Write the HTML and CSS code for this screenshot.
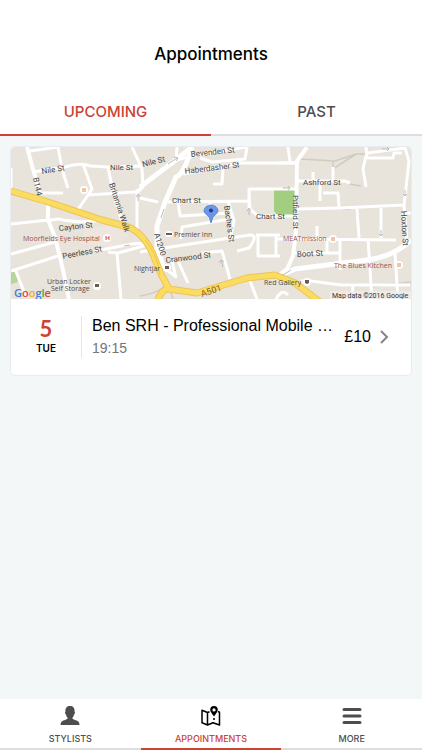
FILE: index.html
```html
<!DOCTYPE html>
<html lang="en">
<head>
<meta charset="utf-8">
<meta name="viewport" content="width=device-width, initial-scale=1">
<title>Appointments</title>
<link rel="stylesheet" href="styles.css">
</head>
<body>
<header class="header">
  <h1 class="title">Appointments</h1>
  <nav class="tabs" aria-label="Appointment lists">
    <button class="tab tab-active" type="button">UPCOMING</button>
    <button class="tab" type="button">PAST</button>
  </nav>
</header>

<main class="content">
  <article class="card">
    <svg class="map" viewBox="11 147 400 152" role="img" aria-label="Map of the appointment location">
      <rect x="11" y="147" width="400" height="152" fill="#e8e3db"/>
      <path d="M274 189h21v27h-17l-4-5z" fill="#a3cd81"/>
      <path d="M11 269l5 1 2 12-7 2z" fill="#b5d59a"/>
      <path d="M86 229l29-4 14 10-14 12-35-3z" fill="#eee5df"/>
      <g fill="none" stroke="#d1ccc2" stroke-width="1.5">
        <path d="M299 159l36 2 21-7h11M333 161v8l23-15M349 184l12 2M323 193h14M342 209h9M140 296q17-3 24-9M168 284l5 15M370 287l41-5"/>
      </g>
      <g fill="none" stroke="#fff" stroke-width="3" stroke-linejoin="round">
        <path stroke-width="4" d="M27 147l6 22 7 25M48 205v15l7 17 8 33 6 29"/>
        <path d="M11 168v20M30 151l28-4 4 22 6 19M33 172l32-5q16-5 25-1l18 1 34-1M83 164l9 25-4 6-11 16M88 195l47-3 8-5M108 167l5 25 9 30M40 193h23M132 147l10 22 1 18-6 6v41M11 224l37-4M11 254l44-12M11 271l47-15M15 269l11 28M46 221l12-2q25 5 42 1M95 251l37-7 15-1M108 252l9 1 4 46M118 253l29-8"/>
        <path stroke-width="5" d="M140 187l37-28 15-12M192 147q-8 27-16 30l-11 25-8 24v21l6 19"/>
        <path d="M177 147l-1 13 16-4 55-9-2 12-33 3-12-4M183 174l57-11h55M223 167l-1 17h-9M167 202l82-1M178 202l2 14 35-2 12-1M249 209v-20h46M249 189l1 20 8 7h38M210 201v19M140 198l18 4M140 252l17-3 93-14q9 0-1 13l-12 3M181 239l1-12 48-8M228 201l6 20-3 14M162 266l13 10 M178 261l10 22M172 261l4 17M202 253l20-2 8 28M256 235h24M258 235v21h22M276 235v21M250 281l7 18"/>
        <path stroke-width="4" d="M307 147l-10 14-1 70-3 25-6 13-12 9"/>
        <path d="M275 163h20M288 147l2 15M296 209l45-1 62-3M366 147l1 11h26l1-5h8M366 156l-3 13 3 18M367 153l38-5 4 13-5 45 3 35M297 181h48l5 2M313 172v9M333 167v14M320 181v20M323 193h15l1 14M357 209l2 29M381 208v30M402 213h9M275 239h16l105 1M317 226v12M327 238v14M340 238v32M295 253h45M368 239l4 60M395 254l3 45M301 281h10l30 4h69M353 285l-1 14M276 299q6-11 12-4"/>
        <path stroke-width="5" d="M275 278l20-9 72-9q26-3 44-20"/>
      </g>
      <g fill="none" stroke-linejoin="round">
        <path stroke="#efc451" stroke-width="7" d="M11 191l34 10 57 19 26 7q14 5 24 25l9 22 8 15 28 4 50-15 28-3 20 8 25 19M169 288q-8 2-11 12"/>
        <path stroke="#fbdc62" stroke-width="5" d="M11 191l34 10 57 19 26 7q14 5 24 25l9 22 8 15 28 4 50-15 28-3 20 8 25 19M169 288q-8 2-11 12"/>
        <path stroke="#efc451" d="M145 240q12 13 15 35"/>
      </g>
      <g fill="none" stroke="#bbb">
        <path d="M168 164l9-6m-3-1 4 1-2 3M161 218l3-9M138 201v-6m-2 2 2-3 2 3M249 215v-6m-2 2 2-3 2 3M283 188h7m-2-2 2 2-2 2M382 149h7m-2-2 2 2-2 2M405 190v6m-2-2 2 2 2-2M381 230v6m-2-2 2 2 2-2M223 267l-2-7m-2 3 2-3 3 2M124 246l6-1M283 275l8-5"/>
      </g>
      <g class="street">
        <text x="42" y="174" transform="rotate(-9 42 174)">Nile St</text>
        <text x="110" y="170">Nile St</text>
        <text x="143" y="167" transform="rotate(-14 143 167)">Nile St</text>
        <text x="191" y="157" transform="rotate(-6 191 157)">Bevenden St</text>
        <text x="185" y="174" transform="rotate(-7 185 174)">Haberdasher St</text>
        <text x="172" y="203">Chart St</text>
        <text x="256" y="219">Chart St</text>
        <text x="303" y="185">Ashford St</text>
        <text x="59" y="231" transform="rotate(-6 59 231)">Cayton St</text>
        <text x="63" y="259" transform="rotate(-11 63 259)">Peerless St</text>
        <text x="166" y="263" transform="rotate(-7 166 263)">Cranwood St</text>
        <text x="297" y="257" transform="rotate(-3 297 257)">Boot St</text>
        <text x="33" y="178" transform="rotate(78 33 178)">B144</text>
        <text x="109" y="184" transform="rotate(72 109 184)">Britannia Walk</text>
        <text x="224" y="206" transform="rotate(82 224 206)">Bache's St</text>
        <text x="293" y="195" transform="rotate(90 293 195)">Pitfield St</text>
        <text x="401" y="211" transform="rotate(87 401 211)">Hoxton St</text>
        <text x="154" y="234" transform="rotate(73 154 234)">A1200</text>
        <text x="202" y="297" transform="rotate(-18 202 297)" class="trunk">A501</text>
      </g>
      <g class="place">
        <text x="174" y="237">Premier Inn</text>
        <text x="134" y="271">Nightjar</text>
        <text x="47" y="284">Urban Locker</text>
        <text x="51" y="291">Self Storage</text>
        <text x="264" y="285">Red Gallery</text>
        <text x="23" y="241" class="poi">Moorfields Eye Hospital</text>
        <text x="283" y="241" class="poi">MEATmission</text>
        <text x="334" y="268" class="poi">The Blues Kitchen</text>
      </g>
      <g fill="#fff">
        <circle cx="84" cy="190" r="4"/><circle cx="107" cy="238" r="4"/><circle cx="333" cy="239" r="4"/><circle cx="399" cy="265" r="4"/><circle cx="97" cy="286" r="4"/><circle cx="167" cy="268" r="4"/><circle cx="307" cy="282" r="4"/><ellipse cx="169" cy="234" rx="4" ry="3"/>
      </g>
      <path d="M83 188v4m2-4v4M332 237v4m2-4v4M398 263v4m2-4v4" stroke="#e98b3e" fill="none"/>
      <path d="M106 236v4m3-4v4m-3-2h3" stroke="#d65b56" fill="none"/>
      <path d="M95 284h4v3h-4zM165 266h4v3h-4zM305 280h4v3l-2 1-2-1zM166 233h6v2h-6z" fill="#6b5a55"/>
      <path d="M211 223l-2-6c-3-3-5-4-5-6a7 6 0 0 1 14 0c0 2-2 3-5 6z" fill="#6a96ee" stroke="#4a72c4" stroke-width=".7"/>
      <circle cx="211" cy="210.500" r="2" fill="#213b75"/>
      <rect x="330" y="291" width="81" height="8" fill="#f0eeea" opacity=".8"/>
      <text x="332" y="298" class="credit">Map data ©2016 Google</text>
      <text x="14" y="297" class="brand"><tspan fill="#4478dd">G</tspan><tspan fill="#de4938">o</tspan><tspan fill="#edb321">o</tspan><tspan fill="#4478dd">g</tspan><tspan fill="#35a853">l</tspan><tspan fill="#de4938">e</tspan></text>
    </svg>
    <a class="booking" href="#">
      <span class="date"><span class="day">5</span><span class="weekday">TUE</span></span>
      <span class="details"><span class="name">Ben SRH - Professional Mobile …</span><span class="time">19:15</span></span>
      <span class="price">£10</span>
      <svg class="chevron" viewBox="0 0 10 14" aria-hidden="true"><path d="M2 1l6 6-6 6" fill="none" stroke="#858585" stroke-width="2"/></svg>
    </a>
  </article>
</main>

<nav class="bottom" aria-label="Main">
  <a class="item" href="#">
    <svg class="icon" viewBox="0 0 22 22" aria-hidden="true"><path fill="#4d4d4d" d="M11 1c3 0 5 2 4.500 5.500 1 1 .3 2.500-.5 3-.2 1.500-.7 2.300-1.500 3v1.300c2 1.700 7 1.200 7 6.200H1.500c0-5 5-4.500 7-6.200v-1.300c-.8-.7-1.300-1.500-1.500-3-.8-.5-1.500-2-.5-3C6 3 8 1 11 1z"/></svg>
    <span>STYLISTS</span>
  </a>
  <a class="item item-active" href="#" aria-current="page">
    <svg class="icon" viewBox="0 0 22 22" aria-hidden="true"><g fill="none" stroke="#000" stroke-width="1.500" stroke-linejoin="round"><path d="M9.500 6.700L7.500 7.500 2 5.300v12.500L7.500 20l5.500-2.200 6.500 2.200V7.200L18 6.500M7.500 7.500V20M14 13v2"/></g><path fill="#000" fill-rule="evenodd" d="M14 11.500c-2-3-3.800-4.600-3.800-6.700a3.800 3.800 0 0 1 7.600 0c0 2.100-1.800 3.700-3.800 6.700zM14 3.300a1.600 1.600 0 1 0 0 3.200 1.600 1.600 0 0 0 0-3.200z"/></svg>
    <span>APPOINTMENTS</span>
  </a>
  <a class="item" href="#">
    <svg class="icon" viewBox="0 0 22 22" aria-hidden="true"><path d="M3 4.500h16M3 11h16M3 17.500h16" stroke="#4d4d4d" stroke-width="3" stroke-linecap="round"/></svg>
    <span>MORE</span>
  </a>
</nav>
</body>
</html>
```
FILE: styles.css
```css
* {
  box-sizing: border-box;
}

body {
  margin: 0;
  min-height: 100vh;
  display: flex;
  flex-direction: column;
  background: #f3f7f8;
  color: #000;
  font-family: "Liberation Sans", Arial, sans-serif;
}

.header {
  background: #fff;
}

.title {
  margin: 0;
  padding: 42px 16px 24px;
  font: 500 17px/24px Inter, "Liberation Sans", sans-serif;
  text-align: center;
}

.tabs {
  display: flex;
}

.tab {
  flex: 1;
  height: 46px;
  padding: 0;
  border: 0;
  border-bottom: 2px solid #dedede;
  background: none;
  color: #4d4d4d;
  font: 500 15px/20px Inter, sans-serif;
}

.tab-active {
  border-color: #cb4332;
  color: #cb4332;
}

.content {
  flex: 1;
  padding: 10px;
}

.card {
  overflow: hidden;
  border: 1px solid #e8ecee;
  border-radius: 5px;
  background: #fff;
}

.map {
  display: block;
  width: 100%;
}

.street {
  fill: #444;
  font: 8px Roboto, sans-serif;
}

.street .trunk {
  fill: #7b5a16;
  font-size: 9px;
}

.place {
  fill: #554c48;
  font: 7px/7px "Open Sans", sans-serif;
}

.place .poi {
  fill: #9a5149;
}

.credit {
  fill: #333;
  font: 7px Roboto, sans-serif;
}

.brand {
  font: 600 11px "Open Sans", sans-serif;
}

.booking {
  display: flex;
  align-items: center;
  height: 76px;
  padding-right: 22px;
  color: inherit;
  text-decoration: none;
}

.date {
  display: flex;
  flex-direction: column;
  align-items: center;
  width: 71px;
  height: 42px;
  border-right: 1px solid #e5e5e5;
}

.day {
  color: #cb4332;
  font: 700 22px/26px Lato, sans-serif;
}

.weekday {
  font: 600 10px/12px Inter, sans-serif;
}

.details {
  flex: 1;
  min-width: 0;
  padding-left: 10px;
}

.name,
.time {
  display: block;
  line-height: 22px;
}

.name {
  overflow: hidden;
  font-size: 16px;
  text-overflow: ellipsis;
  white-space: nowrap;
}

.time {
  color: #757575;
  font-size: 14px;
}

.price {
  margin: 0 8px 0 6px;
  font-size: 16px;
}

.chevron {
  width: 10px;
  height: 14px;
}

.bottom {
  display: flex;
  background: #fff;
}

.item {
  flex: 1;
  display: flex;
  flex-direction: column;
  align-items: center;
  gap: 6px;
  padding: 6px 0 3px;
  border-bottom: 2px solid #dedede;
  color: #4d4d4d;
  font: 500 9px/12px Inter, sans-serif;
  text-decoration: none;
}

.item-active {
  border-color: #cb4332;
  color: #cb4332;
}

.icon {
  width: 22px;
  height: 22px;
}
```
